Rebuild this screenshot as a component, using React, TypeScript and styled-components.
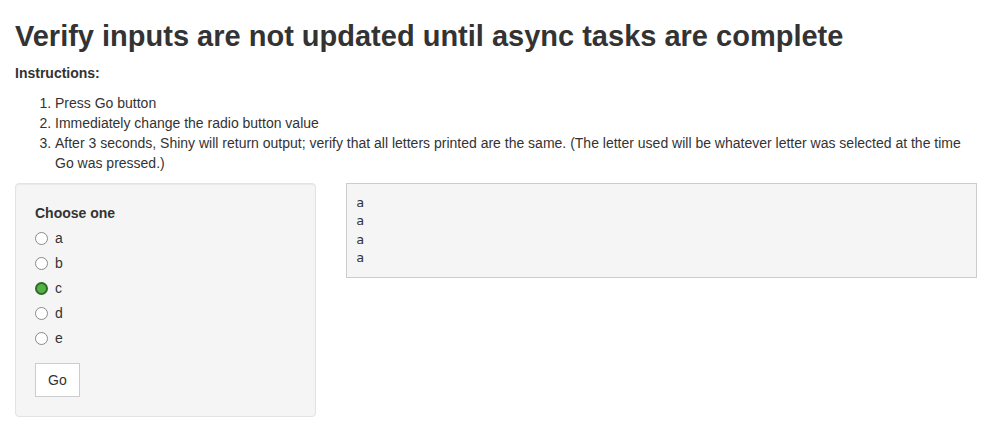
import React, { useState } from "react";
import styled, { createGlobalStyle } from "styled-components";

const Global = createGlobalStyle`
  * { box-sizing: border-box; }
  html, body { margin: 0; padding: 0; background: #fff; }
  body {
    font-family: "Liberation Sans", Arial, sans-serif;
    font-size: 14px;
    line-height: 1.42857143;
    color: #333;
  }
`;

const Container = styled.div`
  padding: 0 15px;
`;

const Title = styled.h2`
  font-size: 29px;
  font-weight: bold;
  line-height: 33px;
  margin: 20px 0 10px;
  color: #333;
`;

const Para = styled.p`
  margin: 0 0 10px;
  font-weight: bold;
`;

const Steps = styled.ol`
  margin: 0 0 10px;
  padding-left: 40px;
`;

const Row = styled.div`
  display: grid;
  grid-template-columns: 1fr 2fr;
  margin: 0 -15px;
`;

const Col = styled.div`
  padding: 0 15px;
  min-width: 0;
`;

const Well = styled.div`
  min-height: 20px;
  padding: 19px;
  background: #f5f5f5;
  border: 1px solid #e3e3e3;
  border-radius: 4px;
  box-shadow: inset 0 1px 1px rgba(0, 0, 0, 0.05);
  margin-bottom: 20px;
`;

const FormGroup = styled.div`
  margin-bottom: 15px;
`;

const ControlLabel = styled.label`
  display: block;
  font-weight: bold;
  margin-bottom: 5px;
`;

const Options = styled.div`
  display: flex;
  flex-direction: column;
  gap: 5px;
`;

const RadioLabel = styled.label`
  display: flex;
  align-items: center;
  min-height: 20px;
  cursor: pointer;
  font-weight: normal;
`;

const RadioInput = styled.input`
  appearance: none;
  -webkit-appearance: none;
  width: 13px;
  height: 13px;
  margin: 0 7px 0 0;
  border-radius: 50%;
  border: 1px solid #8a8a8a;
  background: #fff;
  flex: none;
  &:checked {
    background: #53b146;
    border: 2px solid #2e6b25;
  }
`;

const Button = styled.button`
  font-family: inherit;
  font-size: 14px;
  line-height: 1.42857143;
  color: #333;
  background: #fff;
  border: 1px solid #ccc;
  border-radius: 0;
  padding: 6px 12px;
  cursor: pointer;
`;

const Pre = styled.pre`
  margin: 0 0 10px;
  padding: 9.5px;
  font-family: "DejaVu Sans Mono", Menlo, monospace;
  font-size: 13px;
  line-height: 1.42857143;
  color: #333;
  background: #f5f5f5;
  border: 1px solid #ccc;
  border-radius: 0;
  white-space: pre-wrap;
`;

const letters = ["a", "b", "c", "d", "e"];

export default function App() {
  const [value, setValue] = useState("c");
  return (
    <>
      <Global />
      <Container>
        <Title>Verify inputs are not updated until async tasks are complete</Title>
        <Para>Instructions:</Para>
        <Steps>
          <li>Press Go button</li>
          <li>Immediately change the radio button value</li>
          <li>
            After 3 seconds, Shiny will return output; verify that all letters printed are the same. (The
            letter used will be whatever letter was selected at the time Go was pressed.)
          </li>
        </Steps>
        <Row>
          <Col>
            <Well>
              <FormGroup>
                <ControlLabel>Choose one</ControlLabel>
                <Options>
                  {letters.map((l) => (
                    <RadioLabel key={l}>
                      <RadioInput
                        type="radio"
                        name="letter"
                        value={l}
                        checked={value === l}
                        onChange={() => setValue(l)}
                      />
                      <span>{l}</span>
                    </RadioLabel>
                  ))}
                </Options>
              </FormGroup>
              <Button>Go</Button>
            </Well>
          </Col>
          <Col>
            <Pre>{"a\na\na\na"}</Pre>
          </Col>
        </Row>
      </Container>
    </>
  );
}
